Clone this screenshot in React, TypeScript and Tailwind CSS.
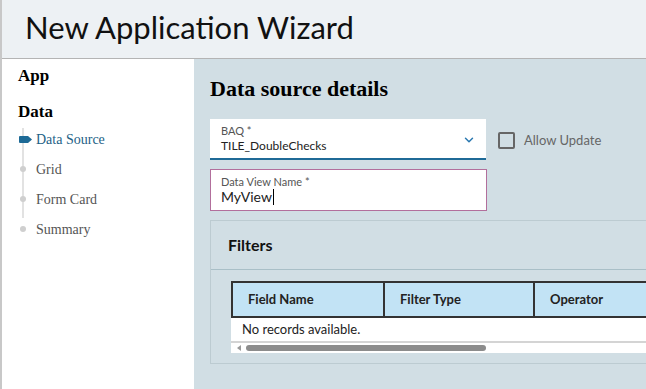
import { ChevronDown } from 'lucide-react';

const STEPS = ['Data Source', 'Grid', 'Form Card', 'Summary'];
const COLUMNS = ['Field Name', 'Filter Type', 'Operator'];

const sans = 'font-["Lato","Liberation_Sans",sans-serif]';
const serif = 'font-["Liberation_Serif","Times_New_Roman",serif]';

function StepList() {
  return (
    <div className="relative mt-[2px]">
      <div className="absolute left-[4px] top-[4px] h-[90px] w-[2px] bg-[#e2e2e2]" />
      {STEPS.map((step, i) => (
        <div key={step} className="relative flex h-[30px] items-center">
          <span className="flex w-[18px] shrink-0 items-center">
            {i === 0 ? (
              <svg width="13" height="7" viewBox="0 0 13 7" className="ml-[1px]">
                <path d="M0 1a1 1 0 0 1 1-1h8l4 3.5L9 7H1a1 1 0 0 1-1-1z" fill="#1d6a96" />
              </svg>
            ) : (
              <span className="ml-[2px] h-[6px] w-[6px] rounded-full bg-[#cfcfcf]" />
            )}
          </span>
          <span className={`${serif} text-[14px] ${i === 0 ? 'text-[#1d5f86]' : 'text-[#555]'}`}>{step}</span>
        </div>
      ))}
    </div>
  );
}

export default function App() {
  return (
    <div className={`flex h-[389px] w-full flex-col overflow-hidden border-l-2 border-[#c8c8c8] ${sans}`}>
      <header className="flex h-[59px] shrink-0 items-center border-b border-[#b4b4b4] bg-[#edf1f4] pl-[23px]">
        <h1 className="pb-[4px] text-[31px] leading-none text-[#111]">New Application Wizard</h1>
      </header>

      <div className="flex min-h-0 flex-1">
        <aside className="w-[192px] shrink-0 bg-white pl-[16px] pt-[7px]">
          <h2 className={`${serif} text-[17px] font-bold leading-[20px] text-black`}>App</h2>
          <h2 className={`${serif} mt-[16px] text-[17px] font-bold leading-[20px] text-black`}>Data</h2>
          <StepList />
        </aside>

        <main className="min-w-0 flex-1 overflow-hidden bg-[#d1dee4] pl-[16px] pt-[17px]">
          <h2 className={`${serif} text-[22px] font-bold leading-[25px] text-black`}>Data source details</h2>

          <div className="mt-[18px] flex items-start gap-[11px]">
            <div className="flex flex-col gap-[9px]">
              <div className="flex h-[41px] w-[276px] items-center border-b-2 border-[#1f6a97] bg-white pl-[11px] pr-[10px]">
                <div className="flex flex-1 flex-col">
                  <span className="text-[11px] leading-[13px] text-[#555]">BAQ *</span>
                  <span className="text-[12px] leading-[17px] text-[#222]">TILE_DoubleChecks</span>
                </div>
                <ChevronDown size={14} strokeWidth={2.5} className="mt-[2px] text-[#2a78b0]" />
              </div>
              <div className="flex h-[42px] w-[277px] flex-col justify-center border border-[#b26f9c] bg-white pl-[10px]">
                <span className="text-[11px] leading-[13px] text-[#555]">Data View Name *</span>
                <span className="flex items-center text-[14px] leading-[18px] text-[#222]">
                  MyView
                  <span className="ml-[1px] h-[16px] w-[1px] bg-black" />
                </span>
              </div>
            </div>
            <label className="mt-[12px] flex items-center gap-[9px]">
              <span className="h-[17px] w-[17px] rounded-[2px] border-2 border-[#666]" />
              <span className="text-[13px] text-[#666]">Allow Update</span>
            </label>
          </div>

          <section className="mt-[9px] w-[480px] border border-[#bccbd1]">
            <div className="flex h-[49px] items-center border-b border-[#a9bfc7] pl-[17px]">
              <h3 className="text-[16px] font-bold text-[#111]">Filters</h3>
            </div>
            <div className="pb-[10px] pl-[20px] pt-[11px]">
              <div className="flex h-[37px] border-2 border-r-0 border-[#333] bg-[#c2e3f5]">
                {COLUMNS.map((col, i) => (
                  <div
                    key={col}
                    className={`flex w-[150px] shrink-0 items-center pl-[15px] text-[13px] font-bold text-[#222] ${i > 0 ? 'border-l-2 border-[#333]' : ''}`}
                  >
                    {col}
                  </div>
                ))}
                <div className="flex-1 border-l-2 border-[#333]" />
              </div>
              <div className="flex h-[23px] items-center bg-white pl-[11px] text-[13px] text-[#222]">
                No records available.
              </div>
              <div className="flex h-[12px] items-center border-t-2 border-[#d4d4d4] bg-white pl-[6px]">
                <svg width="4" height="6" viewBox="0 0 4 6">
                  <path d="M4 0v6L0 3z" fill="#999" />
                </svg>
                <span className="ml-[5px] h-[6px] w-[240px] rounded-full bg-[#8c8c8c]" />
              </div>
            </div>
          </section>
        </main>
      </div>
    </div>
  );
}
